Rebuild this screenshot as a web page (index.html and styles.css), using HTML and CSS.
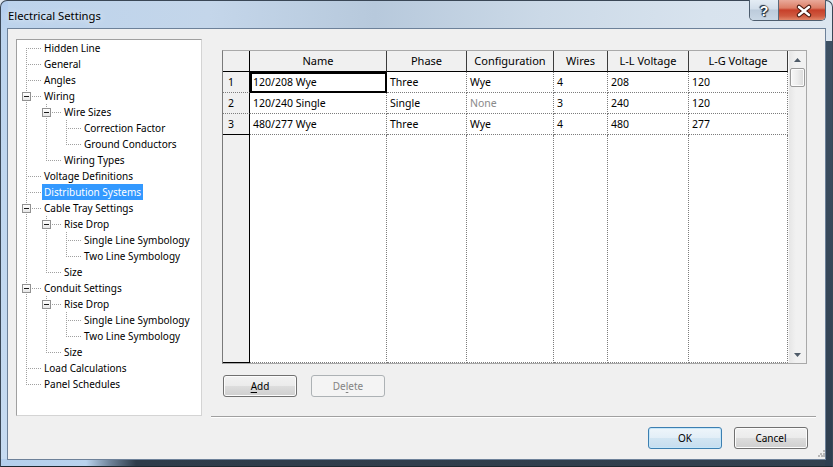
FILE: index.html
```html
<!DOCTYPE html>
<html>
<head>
<meta charset="utf-8">
<title>Electrical Settings</title>
<link rel="stylesheet" href="styles.css">
</head>
<body>
<div class="window">
  <div class="titlebar">
    <span class="title">Electrical Settings</span>
    <div class="caption">
      <span class="cap help">?</span>
      <span class="cap close"><svg width="46" height="20" viewBox="0 0 46 20"><path d="M20 7 L30 15 M30 7 L20 15" stroke="#4a1a10" stroke-width="4.6" stroke-linecap="round"/><path d="M20 7 L30 15 M30 7 L20 15" stroke="#fff" stroke-width="2.4" stroke-linecap="round"/></svg></span>
    </div>
  </div>
  <div class="client">
    <div class="main">
      <div class="tree">
        <div class="node"><span class="g first"></span><span class="lbl">Hidden Line</span></div>
        <div class="node"><span class="g tee"></span><span class="lbl">General</span></div>
        <div class="node"><span class="g tee"></span><span class="lbl">Angles</span></div>
        <div class="node"><span class="g tee"><i class="box"></i></span><span class="lbl">Wiring</span></div>
        <div class="node"><span class="g pipe"></span><span class="g tee"><i class="box"></i></span><span class="lbl">Wire Sizes</span></div>
        <div class="node"><span class="g pipe"></span><span class="g pipe"></span><span class="g tee"></span><span class="lbl">Correction Factor</span></div>
        <div class="node"><span class="g pipe"></span><span class="g pipe"></span><span class="g elbow"></span><span class="lbl">Ground Conductors</span></div>
        <div class="node"><span class="g pipe"></span><span class="g elbow"></span><span class="lbl">Wiring Types</span></div>
        <div class="node"><span class="g tee"></span><span class="lbl">Voltage Definitions</span></div>
        <div class="node"><span class="g tee"></span><span class="lbl sel">Distribution Systems</span></div>
        <div class="node"><span class="g tee"><i class="box"></i></span><span class="lbl">Cable Tray Settings</span></div>
        <div class="node"><span class="g pipe"></span><span class="g tee"><i class="box"></i></span><span class="lbl">Rise Drop</span></div>
        <div class="node"><span class="g pipe"></span><span class="g pipe"></span><span class="g tee"></span><span class="lbl">Single Line Symbology</span></div>
        <div class="node"><span class="g pipe"></span><span class="g pipe"></span><span class="g elbow"></span><span class="lbl">Two Line Symbology</span></div>
        <div class="node"><span class="g pipe"></span><span class="g elbow"></span><span class="lbl">Size</span></div>
        <div class="node"><span class="g tee"><i class="box"></i></span><span class="lbl">Conduit Settings</span></div>
        <div class="node"><span class="g pipe"></span><span class="g tee"><i class="box"></i></span><span class="lbl">Rise Drop</span></div>
        <div class="node"><span class="g pipe"></span><span class="g pipe"></span><span class="g tee"></span><span class="lbl">Single Line Symbology</span></div>
        <div class="node"><span class="g pipe"></span><span class="g pipe"></span><span class="g elbow"></span><span class="lbl">Two Line Symbology</span></div>
        <div class="node"><span class="g pipe"></span><span class="g elbow"></span><span class="lbl">Size</span></div>
        <div class="node"><span class="g tee"></span><span class="lbl">Load Calculations</span></div>
        <div class="node"><span class="g elbow"></span><span class="lbl">Panel Schedules</span></div>
      </div>
      <div class="panel">
        <div class="grid">
          <div class="cols">
            <div class="row head">
              <span class="c rh"></span><span class="c">Name</span><span class="c">Phase</span><span class="c">Configuration</span><span class="c">Wires</span><span class="c">L-L Voltage</span><span class="c">L-G Voltage</span>
            </div>
            <div class="row">
              <span class="c rh">1</span><span class="c focus">120/208 Wye</span><span class="c">Three</span><span class="c">Wye</span><span class="c">4</span><span class="c">208</span><span class="c">120</span>
            </div>
            <div class="row">
              <span class="c rh">2</span><span class="c">120/240 Single</span><span class="c">Single</span><span class="c muted">None</span><span class="c">3</span><span class="c">240</span><span class="c">120</span>
            </div>
            <div class="row">
              <span class="c rh last">3</span><span class="c">480/277 Wye</span><span class="c">Three</span><span class="c">Wye</span><span class="c">4</span><span class="c">480</span><span class="c">277</span>
            </div>
            <div class="row filler">
              <span class="c rh"></span><span class="c"></span><span class="c"></span><span class="c"></span><span class="c"></span><span class="c"></span><span class="c"></span>
            </div>
          </div>
          <div class="vscroll">
            <span class="arrow"><svg width="7" height="4" viewBox="0 0 7 4"><polygon points="3.5,0 7,4 0,4" fill="#4f5b68"/></svg></span>
            <span class="thumb"></span>
            <span class="track"></span>
            <span class="arrow"><svg width="7" height="4" viewBox="0 0 7 4"><polygon points="0,0 7,0 3.5,4" fill="#4f5b68"/></svg></span>
          </div>
        </div>
        <div class="grid-buttons">
          <button class="btn"><u>A</u>dd</button>
          <button class="btn" disabled>De<u>l</u>ete</button>
        </div>
      </div>
    </div>
    <div class="footer">
      <button class="btn default">OK</button>
      <button class="btn">Cancel</button>
      <span class="grip"><svg width="7" height="7" viewBox="0 0 7 7"><g fill="#b8b8b8"><rect x="5" y="0" width="2" height="2"/><rect x="2" y="3" width="2" height="2"/><rect x="5" y="3" width="2" height="2"/><rect x="0" y="5" width="2" height="2"/><rect x="3" y="5" width="2" height="2"/><rect x="5" y="5" width="2" height="2"/></g></svg></span>
    </div>
  </div>
</div>
</body>
</html>
```

FILE: styles.css
```css
* { box-sizing: border-box; }
html, body { margin: 0; padding: 0; }
body {
  width: 833px;
  height: 467px;
  overflow: hidden;
  background: #dfe7ef;
  font-family: "Segoe UI", "Noto Sans", "Liberation Sans", sans-serif;
  font-size: 10px;
  color: #000;
}
.window {
  width: 833px;
  height: 467px;
  display: flex;
  flex-direction: column;
  padding: 0 6px 6px 6px;
  border: 1px solid #3a4756;
  border-bottom-color: #1e2830;
  border-radius: 7px 7px 0 0;
  background:
    linear-gradient(#3e5164, #2f3f50) right 0 top 40px / 7px calc(100% - 40px) no-repeat,
    linear-gradient(to right, #b4cfec 0, #b9d3ee 85px, #6c8096 110px, #2f3c4a 135px, #33414f 100%) left bottom / 100% 7px no-repeat,
    linear-gradient(to bottom, #b3cded 0, #bcd4ee 30px, #c6dbf1 100%) left top / 7px 100% no-repeat,
    linear-gradient(to right, #bcd3ec 0%, #c4d6ea 25%, #b7c9dc 45%, #cbd9e7 65%, #d8e3ee 85%, #dce6f0 100%);
}
.titlebar {
  height: 27px;
  display: flex;
  justify-content: space-between;
  align-items: flex-start;
  flex: none;
}
.title {
  padding: 7px 0 0 1px;
  font-size: 11.25px;
  line-height: 16px;
  color: #000;
  text-shadow: 0 0 6px rgba(255,255,255,0.9);
}
.caption {
  display: flex;
  margin-top: -1px;
  height: 21px;
  border: 1px solid #4d5d6e;
  border-top: none;
  border-radius: 0 0 5px 5px;
  overflow: hidden;
}
.cap {
  display: flex;
  align-items: center;
  justify-content: center;
  height: 20px;
}
.help {
  width: 29px;
  border-right: 1px solid #5a6a7a;
  background: linear-gradient(#e4ecf4 0%, #d2deea 45%, #bccbdb 50%, #c9d7e5 100%);
  color: #fff;
  font-family: "Liberation Sans", sans-serif;
  font-weight: bold;
  font-size: 14px;
  padding-top: 2px;
  text-shadow: 0 0 1px #1d2a38, 0 0 1px #1d2a38, 1px 1px 1px #1d2a38, -1px -1px 1px #1d2a38;
}
.close {
  width: 46px;
  background: linear-gradient(#e9a99a 0%, #dc7d66 40%, #c7402a 50%, #cf5a40 80%, #e1876a 100%);
}
.close svg { display: block; }

.client {
  flex: 1;
  display: flex;
  flex-direction: column;
  background: #f0f0f0;
  border: 1px solid #6d8199;
}
.main {
  display: flex;
  gap: 9px;
  padding: 10px 0 0 8px;
  flex: none;
}
.tree {
  width: 186px;
  height: 377px;
  border: 1px solid #a0a0a0;
  border-right-color: #d4d4d4;
  border-bottom-color: #d4d4d4;
  background: #fff;
  padding: 0 0 0 5px;
}
.node {
  display: flex;
  height: 16px;
  align-items: stretch;
}
.g {
  width: 20px;
  height: 16px;
  flex: none;
  background-repeat: no-repeat;
}
.pipe {
  background-image: repeating-linear-gradient(to bottom, #a0a0a0 0 1px, transparent 1px 2px);
  background-position: 4px 0;
  background-size: 1px 16px;
}
.tee {
  background-image:
    repeating-linear-gradient(to bottom, #a0a0a0 0 1px, transparent 1px 2px),
    repeating-linear-gradient(to right, #a0a0a0 0 1px, transparent 1px 2px);
  background-position: 4px 0, 6px 8px;
  background-size: 1px 16px, 14px 1px;
}
.elbow {
  background-image:
    repeating-linear-gradient(to bottom, #a0a0a0 0 1px, transparent 1px 2px),
    repeating-linear-gradient(to right, #a0a0a0 0 1px, transparent 1px 2px);
  background-position: 4px 0, 6px 8px;
  background-size: 1px 9px, 14px 1px;
}
.first {
  background-image:
    repeating-linear-gradient(to bottom, #a0a0a0 0 1px, transparent 1px 2px),
    repeating-linear-gradient(to right, #a0a0a0 0 1px, transparent 1px 2px);
  background-position: 4px 8px, 6px 8px;
  background-size: 1px 8px, 14px 1px;
}
.box {
  display: block;
  width: 9px;
  height: 9px;
  margin-top: 4px;
  border: 1px solid #919191;
  background: linear-gradient(#ffffff, #e6e6e6);
}
.box::before {
  content: "";
  display: block;
  width: 5px;
  height: 1px;
  margin: 3px 0 0 1px;
  background: #1a1a1a;
}
.lbl {
  padding: 0 2px;
  line-height: 17px;
  font-size: 10px;
  white-space: nowrap;
  color: #000;
}
.lbl.sel {
  background: #3399ff;
  color: #fff;
}

.panel {
  width: 605px;
  height: 378px;
  display: flex;
  flex-direction: column;
  padding: 11px 0 0 11px;
  border-bottom: 1px solid #a0a0a0;
  box-shadow: 0 1px 0 #ffffff;
}
.grid {
  width: 585px;
  height: 314px;
  display: flex;
  border: 1px solid #a9a9a9;
  border-left-color: #7a7a7a;
  background: #fff;
}
.cols {
  width: 565px;
  display: flex;
  flex-direction: column;
}
.row {
  display: grid;
  grid-template-columns: 27px 137px 80px 87px 54px 81px 99px;
  height: 21px;
  flex: none;
}
.c {
  display: block;
  border-right: 1px dotted #7c7c7c;
  border-bottom: 1px dotted #7c7c7c;
  padding: 0 0 0 3px;
  font-size: 10.5px;
  line-height: 21px;
  white-space: nowrap;
  overflow: hidden;
}
.c.rh {
  background: #f0f0f0;
  border-right: 1px solid #000;
  padding-left: 5px;
}
.c.rh.last { border-bottom: 1px solid #000; }
.head .c {
  background: #f0f0f0;
  border-right: 1px solid #3c3c3c;
  border-bottom: 1px solid #000;
  text-align: center;
  font-size: 11px;
  line-height: 20px;
  padding: 0;
}
.head .c.rh { border-right: 1px solid #000; }
.c.focus {
  outline: 2px solid #000;
  outline-offset: -2px;
}
.c.muted { color: #8a8a8a; }
.row.filler {
  flex: 1;
  height: auto;
}
.filler .c.rh {
  border-bottom: 1px solid #000;
}

.vscroll {
  width: 18px;
  display: flex;
  flex-direction: column;
  background: linear-gradient(to right, #e6e6e6, #f1f1f1 40%, #f1f1f1);
  border-left: 1px solid #f8f8f8;
}
.arrow {
  height: 17px;
  display: flex;
  align-items: center;
  justify-content: center;
  flex: none;
}
.arrow svg { display: block; }
.thumb {
  height: 19px;
  margin: 0 1px 0 1px;
  border: 1px solid #9a9a9a;
  border-radius: 2px;
  background: linear-gradient(to right, #f7f7f7, #ececec 50%, #dadada);
  box-shadow: inset 0 0 0 1px #fbfbfb;
  flex: none;
}
.track { flex: 1; }

.grid-buttons {
  display: flex;
  gap: 14px;
  margin-top: 11px;
  padding-left: 1px;
}
.btn {
  width: 74px;
  height: 22px;
  padding: 0;
  margin: 0;
  border: 1px solid #707070;
  border-radius: 3px;
  background: linear-gradient(#f2f2f2 0%, #ebebeb 50%, #dddddd 50%, #cfcfcf 100%);
  box-shadow: inset 0 0 0 1px #fcfcfc;
  font-family: "Segoe UI", "Noto Sans", "Liberation Sans", sans-serif;
  font-size: 10px;
  color: #000;
  line-height: 18px;
}
.btn u { text-decoration: underline; text-underline-offset: 2px; }
.btn:disabled {
  border-color: #adb2b5;
  background: #f4f4f4;
  box-shadow: none;
  color: #838383;
}
.btn.default {
  border-color: #3c7fb1;
  background: linear-gradient(#eef5fa 0%, #e2eef7 50%, #d2e5f2 50%, #c6ddef 100%);
  box-shadow: inset 0 0 0 1px #c5e6f9;
}

.footer {
  flex: 1;
  display: flex;
  justify-content: flex-end;
  align-items: flex-start;
  gap: 12px;
  padding-top: 10px;
}
.grip {
  align-self: flex-end;
  margin: 0 0 2px -2px;
  width: 7px;
  height: 7px;
}
.grip svg { display: block; }
```
